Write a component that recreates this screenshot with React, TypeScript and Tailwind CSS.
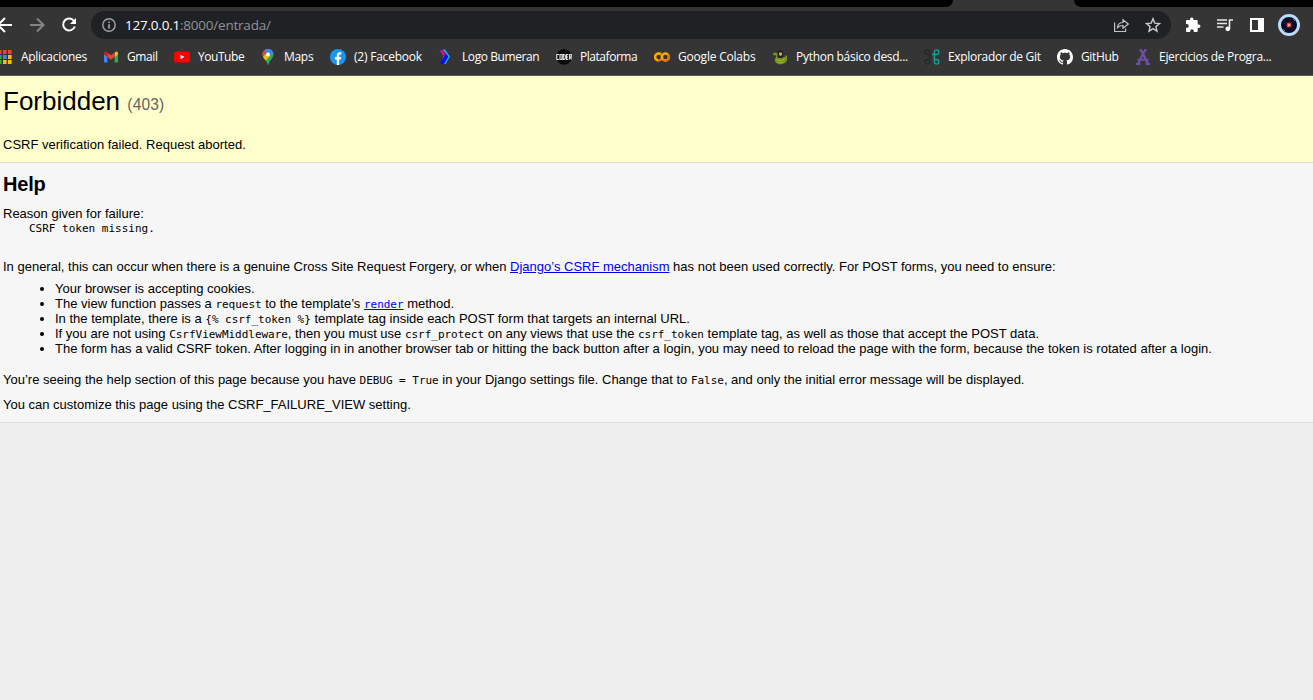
import type { ReactNode } from "react";

function Code({ children }: { children: ReactNode }) {
  return <code className="font-['DejaVu_Sans_Mono',monospace] text-[11px] leading-none tracking-[-0.03px]">{children}</code>;
}

function AppsIcon() {
  const colors = ["#ea4335", "#ea4335", "#ea4335", "#34a853", "#4285f4", "#fbbc05", "#34a853", "#fbbc05", "#fbbc05"];
  return (
    <svg width="16" height="16" viewBox="0 0 16 16">
      {colors.map((c, i) => (
        <rect key={i} x={1 + (i % 3) * 5} y={1 + Math.floor(i / 3) * 5} width="3.6" height="4" fill={c} />
      ))}
    </svg>
  );
}

function GmailIcon() {
  return (
    <svg width="16" height="16" viewBox="0 0 16 16">
      <path d="M1 4v8.500c0 .6.4 1 1 1h2.400V7z" fill="#4285f4" />
      <path d="M15 4v8.500c0 .6-.4 1-1 1h-2.400V7z" fill="#34a853" />
      <path d="M11.600 4v4L15 5.600V4.200c0-1.500-1.500-2-2.500-1.200z" fill="#fbbc04" />
      <path d="M4.400 8V3.600L8 6.300l3.600-2.700V8L8 10.700z" fill="#ea4335" />
      <path d="M1 4.200v1.400L4.400 8V3.600L3.500 3C2.500 2.200 1 2.700 1 4.200z" fill="#c5221f" />
    </svg>
  );
}

function YouTubeIcon() {
  return (
    <svg width="16" height="16" viewBox="0 0 16 16">
      <rect x="0" y="2.500" width="16" height="11" rx="2.600" fill="#f00" />
      <path d="M6.500 5.700v4.600L10.400 8z" fill="#fff" />
    </svg>
  );
}

function MapsIcon() {
  return (
    <svg width="16" height="16" viewBox="0 0 16 16">
      <defs>
        <clipPath id="pin">
          <path d="M8 0C4.900 0 2.500 2.400 2.500 5.500c0 4 4.300 5.500 5 10.100.1.500.9.500 1 0 .7-4.600 5-6.100 5-10.100C13.500 2.400 11.100 0 8 0z" />
        </clipPath>
      </defs>
      <g clipPath="url(#pin)">
        <rect width="16" height="16" fill="#34a853" />
        <path d="M0 12L12 0H0z" fill="#1a73e8" />
        <path d="M0 1h5L6.500 4 3 7.500H0z" fill="#ea4335" />
        <path d="M2 9l4.500-5L10 7l-5 5z" fill="#fbbc04" />
        <path d="M4 0h10v4L9 7 6 4z" fill="#4285f4" />
      </g>
      <circle cx="8" cy="5.500" r="1.900" fill="#fff" />
    </svg>
  );
}

function FacebookIcon() {
  return (
    <svg width="16" height="16" viewBox="0 0 16 16">
      <circle cx="8" cy="8" r="8" fill="#1696f5" />
      <path d="M6.800 16v-5.600H4.900V8h1.900V6.400c0-2 1.100-3.100 2.900-3.100.6 0 1.200.1 1.600.2v2h-1c-.9 0-1.200.5-1.200 1.200V8h2l-.4 2.400H9.100V16z" fill="#fff" />
    </svg>
  );
}

function BumeranIcon() {
  return (
    <svg width="16" height="16" viewBox="0 0 16 16">
      <path d="M4.500.5H7L12 7.500 7.500 15H6z" fill="#12bcd4" />
      <path d="M1.500 1.500L4.500.5 10.500 7.500 6 15H2.500v-2L6 8z" fill="#1208ff" />
      <path d="M1.500 1.500L4 .8 7.500 5 5.500 7.300z" fill="#e6125f" />
    </svg>
  );
}

function CoderIcon() {
  return (
    <svg width="16" height="16" viewBox="0 0 16 16">
      <circle cx="8" cy="8" r="7.700" fill="#080808" />
      <g fill="none" stroke="#ddd" strokeWidth="1.200">
        <path d="M3 5.500H.8v5H3M4 5.500h2v5H4zM7.300 5.500h1.200l.8 1v3l-.8 1H7.300zM12.300 5.500h-1.700v5h1.700M10.600 8h1.400M13.500 10.500v-5h1.800V8h-1.800M14.300 8l1.200 2.500" />
      </g>
    </svg>
  );
}

function ColabIcon() {
  return (
    <svg width="16" height="16" viewBox="0 0 16 16" fill="none" strokeWidth="2.300">
      <circle cx="4.600" cy="8" r="3.500" stroke="#e8710a" />
      <path d="M7 5.500A3.500 3.500 0 1 0 4 11.450" stroke="#f9ab00" />
      <circle cx="11.400" cy="8" r="3.500" stroke="#f9ab00" />
      <path d="M8.900 10.500a3.500 3.500 0 0 0 5-5" stroke="#e8710a" />
    </svg>
  );
}

function SnakeIcon() {
  return (
    <svg width="16" height="16" viewBox="0 0 16 16">
      <path d="M1 4.500C2 3 5 3 5.500 5.500L5 8h8l.5-2 1.500 1v4.500L13 14l-4.500 1.500L4 14l-1.500-3L4 8V6.500L1 6z" fill="#71921c" />
      <path d="M6 3.500c0-3 5-3 5 .5L10.500 7h-4z" fill="#241a17" />
      <path d="M7 3.500h3V6L8.500 7 7 6z" fill="#d79a78" />
      <path d="M6 7h5v2H6z" fill="#292322" />
      <path d="M4 10.500c3 1.500 6 1.500 9-.5M5 13.200c2 .8 4.500.8 6.500-.2" fill="none" stroke="#a5bd3c" strokeWidth=".9" />
    </svg>
  );
}

function GitExplorerIcon() {
  return (
    <svg width="16" height="16" viewBox="0 0 16 16" fill="none" strokeWidth="1.300">
      <path d="M6.200 5.500H3A2.300 2.300 0 1 1 5.700 3v10A2.300 2.300 0 1 1 3 10.500h3" stroke="#23282d" />
      <path d="M8 5.500h5A2.300 2.300 0 1 0 10.300 3v10A2.300 2.300 0 1 0 13 10.500h-3" stroke="#12a594" />
    </svg>
  );
}

function GitHubIcon() {
  return (
    <svg width="16" height="16" viewBox="0 0 16 16" fill="#fff">
      <path d="M8 0C3.580 0 0 3.580 0 8c0 3.540 2.290 6.530 5.470 7.590.4.070.55-.17.55-.38 0-.19-.01-.82-.01-1.490-2.010.37-2.530-.49-2.690-.94-.09-.23-.48-.94-.82-1.130-.28-.15-.68-.52-.01-.53.63-.01 1.080.58 1.230.82.72 1.210 1.870.87 2.330.66.07-.52.28-.87.51-1.070-1.780-.2-3.640-.89-3.640-3.950 0-.87.31-1.590.82-2.150-.08-.2-.36-1.020.08-2.120 0 0 .67-.21 2.200.82.64-.18 1.320-.27 2-.27s1.360.09 2 .27c1.530-1.040 2.200-.82 2.200-.82.44 1.100.16 1.920.08 2.120.51.56.82 1.270.82 2.150 0 3.070-1.870 3.750-3.650 3.950.29.25.54.73.54 1.480 0 1.070-.01 1.930-.01 2.200 0 .21.15.46.55.38A8.010 8.010 0 0 0 16 8c0-4.420-3.580-8-8-8z" />
    </svg>
  );
}

function ExercisesIcon() {
  return (
    <svg width="16" height="16" viewBox="0 0 16 16" fill="none" stroke="#6a51a3">
      <path d="M5 0l3 4.500L13 15M11 0L8 4.500 3 15" strokeWidth="2.300" />
      <path d="M2.500 10.800h11M1 15h4.500M10.500 15H15" strokeWidth="2" />
    </svg>
  );
}

const bookmarks: { label: string; icon: ReactNode; width: string; tracking: string }[] = [
  { label: "Aplicaciones", icon: <AppsIcon />, width: "w-[106px]", tracking: "tracking-[-0.28px]" },
  { label: "Gmail", icon: <GmailIcon />, width: "w-[71px]", tracking: "tracking-[-0.4px]" },
  { label: "YouTube", icon: <YouTubeIcon />, width: "w-[86px]", tracking: "tracking-[-0.45px]" },
  { label: "Maps", icon: <MapsIcon />, width: "w-[70px]", tracking: "tracking-[-0.3px]" },
  { label: "(2) Facebook", icon: <FacebookIcon />, width: "w-[108px]", tracking: "tracking-[-0.22px]" },
  { label: "Logo Bumeran", icon: <BumeranIcon />, width: "w-[118px]", tracking: "tracking-[-0.42px]" },
  { label: "Plataforma", icon: <CoderIcon />, width: "w-[98px]", tracking: "tracking-[-0.46px]" },
  { label: "Google Colabs", icon: <ColabIcon />, width: "w-[118px]", tracking: "tracking-[-0.2px]" },
  { label: "Python básico desd...", icon: <SnakeIcon />, width: "w-[152px]", tracking: "tracking-[-0.29px]" },
  { label: "Explorador de Git", icon: <GitExplorerIcon />, width: "w-[133px]", tracking: "tracking-[-0.31px]" },
  { label: "GitHub", icon: <GitHubIcon />, width: "w-[78px]", tracking: "tracking-[-0.35px]" },
  { label: "Ejercicios de Progra...", icon: <ExercisesIcon />, width: "w-[150px]", tracking: "tracking-[-0.29px]" },
];

function BrowserChrome() {
  return (
    <header className="h-[76px] border-b border-[#5b5b5b] bg-[#353535] font-['Open_Sans','Noto_Sans',sans-serif]">
      <div className="flex h-[7px] justify-between">
        <div className="w-[953px] rounded-br-[7px] bg-black" />
        <div className="w-[239px] rounded-bl-[7px] bg-black" />
      </div>
      <div className="flex h-9 items-center">
        <svg width="91" height="36" viewBox="0 0 91 36" fill="none" stroke="#fff" strokeWidth="2">
          <path d="M12 18H-1M5 11l-7 7 7 7" />
          <path d="M30 18h13M37 11.500l6.500 6.500-6.500 6.500" stroke="#858585" />
          <path d="M74 14a6 6 0 1 0 .8 5.500" />
          <path d="M76 11v6h-6z" fill="#fff" stroke="none" />
        </svg>
        <div className="flex h-7 w-[1080px] items-center rounded-full bg-[#202124] pr-[10px] pl-[11px]">
          <svg width="14" height="14" viewBox="0 0 14 14" fill="none" stroke="#a0a3a7" strokeWidth="1.400">
            <circle cx="7" cy="7" r="6.200" />
            <path d="M7 6.200V10.500M7 3.500V5" strokeWidth="1.700" />
          </svg>
          <div className="ml-[9px] text-[13.5px] leading-5 tracking-[-0.22px] text-[#8f9397]">
            <span className="text-white">127.0.0.1</span>:8000/entrada/
          </div>
          <svg className="ml-auto" width="17" height="16" viewBox="0 0 17 16" fill="none" stroke="#c0c2c4" strokeWidth="1.200">
            <path d="M1.600 5.500v9h11v-3" />
            <path d="M4.500 10.500c.3-3.500 2.500-5 5.500-5V2.800L15.300 7 10 11.300V8.500c-2.500 0-4 .5-5.500 2z" />
          </svg>
          <svg className="ml-[15px]" width="16" height="16" viewBox="0 0 16 16" fill="none" stroke="#c7c9cb" strokeWidth="1.400">
            <path d="M8 1.700l1.800 4.400 4.700.4-3.600 3.100 1.100 4.600L8 11.700l-4 2.500 1.100-4.600-3.600-3.100 4.700-.4z" />
          </svg>
        </div>
        <svg className="ml-[14px]" width="16" height="16" viewBox="0 0 16 16" fill="#fff">
          <path d="M13.700 7.500h-1V4.300c0-.8-.6-1.300-1.300-1.300H8.500V2.300a1.700 1.700 0 0 0-3.500 0V3H2.300C1.500 3 1 3.500 1 4.300V7h.9a1.900 1.900 0 0 1 0 3.800H1v2.900c0 .7.500 1.300 1.300 1.300h2.900v-1a1.800 1.800 0 0 1 3.600 0v1h2.600c.7 0 1.300-.6 1.300-1.300V11h1a1.750 1.750 0 0 0 0-3.500z" />
        </svg>
        <svg className="ml-4" width="16" height="16" viewBox="0 0 16 16" fill="none" stroke="#e8e8e8" strokeWidth="1.600">
          <path d="M0 3h10M0 6.500h10M0 10h6.500M12.500 12V3H16" />
          <circle cx="10.800" cy="11.800" r="2.400" fill="#fff" stroke="none" />
        </svg>
        <svg className="ml-4" width="16" height="16" viewBox="0 0 16 16">
          <path fillRule="evenodd" d="M1 1h14v14H1zM3 3v10h6V3z" fill="#fff" />
        </svg>
        <svg className="ml-[13px]" width="22" height="22" viewBox="0 0 22 22">
          <circle cx="11" cy="11" r="11" fill="#b9dcfa" />
          <circle cx="11" cy="11" r="8" fill="#0a0b20" />
          <circle cx="11" cy="11" r="3.200" fill="#421044" />
          <circle cx="11" cy="11" r="2.300" fill="#f0425c" />
          <circle cx="11" cy="11" r="1" fill="#ffd070" />
          <path d="M15 5l2 2M5 15l2 2" stroke="#65758f" />
        </svg>
      </div>
      <nav className="-ml-[3px] flex h-7 items-center text-[12px] leading-4 text-white">
        {bookmarks.map((b) => (
          <a key={b.label} className={`flex shrink-0 items-center gap-2 whitespace-nowrap ${b.width} ${b.tracking}`}>
            <span className="shrink-0">{b.icon}</span>
            <span>{b.label}</span>
          </a>
        ))}
      </nav>
    </header>
  );
}

export default function App() {
  return (
    <div className="h-[700px] w-[1313px] overflow-hidden bg-[#eeeeee]">
      <BrowserChrome />
      <main className="font-['Liberation_Sans',Arial,sans-serif] text-[13px] leading-[15px] whitespace-nowrap text-black">
        <section className="h-[87px] border-b border-[#dddddd] bg-[#ffffcc] pt-[10px] pl-[3px]">
          <h1 className="text-[26px] leading-[30px]">
            Forbidden <span className="text-[15.6px] tracking-[0.15px] text-[#666666]">(403)</span>
          </h1>
          <p className="mt-[17px]">CSRF verification failed. Request aborted.</p>
        </section>
        <section className="h-[260px] border-b border-[#dddddd] bg-[#f6f6f6] pt-[9px] pl-[3px]">
          <h2 className="text-[20px] leading-6 font-bold tracking-[-0.2px]">Help</h2>
          <p className="mt-[10px]">Reason given for failure:</p>
          <pre className="pl-[26px] font-['DejaVu_Sans_Mono',monospace] text-[11px] leading-[15px]">CSRF token missing.</pre>
          <p className="mt-[23px]">
            In general, this can occur when there is a genuine Cross Site Request Forgery, or when{" "}
            <a className="text-[#0000ee] underline">Django’s CSRF mechanism</a> has not been used correctly. For POST forms, you need to ensure:
          </p>
          <ul className="mt-[7px] list-disc pl-[52px]">
            <li>Your browser is accepting cookies.</li>
            <li>
              The view function passes a <Code>request</Code> to the template’s{" "}
              <a className="text-[#0000ee] underline"><Code>render</Code></a> method.
            </li>
            <li>
              In the template, there is a <Code>{"{% csrf_token %}"}</Code> template tag inside each POST form that targets an internal URL.
            </li>
            <li>
              If you are not using <Code>CsrfViewMiddleware</Code>, then you must use <Code>csrf_protect</Code> on any views that use the{" "}
              <Code>csrf_token</Code> template tag, as well as those that accept the POST data.
            </li>
            <li>
              The form has a valid CSRF token. After logging in in another browser tab or hitting the back button after a login, you may need to reload
              the page with the form, because the token is rotated after a login.
            </li>
          </ul>
          <p className="mt-4">
            You’re seeing the help section of this page because you have <Code>DEBUG = True</Code> in your Django settings file. Change that to{" "}
            <Code>False</Code>, and only the initial error message will be displayed.
          </p>
          <p className="mt-[10px]">You can customize this page using the CSRF_FAILURE_VIEW setting.</p>
        </section>
      </main>
    </div>
  );
}
